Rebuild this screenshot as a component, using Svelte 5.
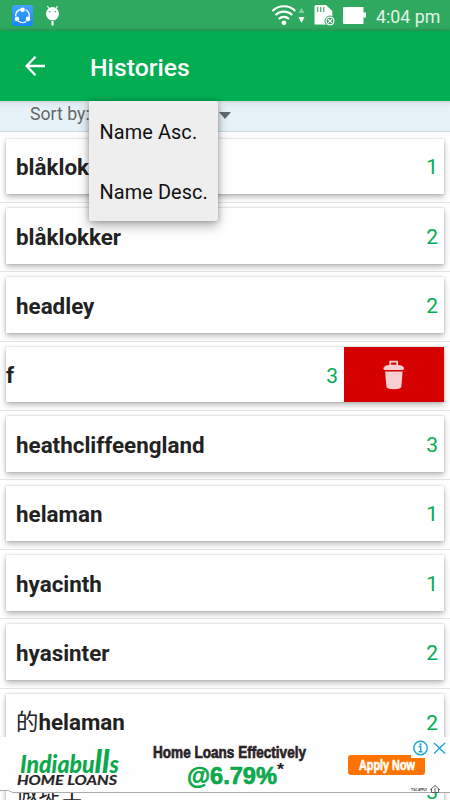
<script>
  const rows = [
    { name: 'blåklok', count: 1 },
    { name: 'blåklokker', count: 2 },
    { name: 'headley', count: 2 },
    { name: 'f', count: 3, swiped: true },
    { name: 'heathcliffeengland', count: 3 },
    { name: 'helaman', count: 1 },
    { name: 'hyacinth', count: 1 },
    { name: 'hyasinter', count: 2 },
    { name: 'helaman', han: '的', count: 2 },
    { name: '', han: '微堤士', count: 3 }
  ];
  const options = ['Name Asc.', 'Name Desc.'];
</script>

<div class="screen">
  <div class="status">
    <svg class="notif" width="50" height="22" viewBox="0 0 50 22">
      <defs>
        <linearGradient id="blue" x1="0" y1="0" x2="0" y2="1">
          <stop offset="0" stop-color="#43a3ff" /><stop offset="1" stop-color="#1688f8" />
        </linearGradient>
      </defs>
      <rect x="0" y="0" width="21" height="21" rx="2.5" fill="url(#blue)" />
      <circle cx="10.5" cy="10.800" r="6.800" fill="none" stroke="#fff" stroke-width="1.300" stroke-dasharray="8.800 5.440" stroke-dashoffset="-6.600" />
      <circle cx="10.5" cy="4.800" r="2.300" fill="#fff" />
      <circle cx="5" cy="13.900" r="2.300" fill="#fff" />
      <circle cx="16" cy="13.900" r="2.300" fill="#fff" />
      <ellipse cx="40.5" cy="8.8" rx="6.5" ry="6.7" fill="#fff" />
      <path d="M37.5 4 35.3 1M43.5 4l2.200-3" stroke="#fff" stroke-width="1.1" />
      <circle cx="37.8" cy="6.8" r=".8" fill="#2fa960" />
      <circle cx="43.2" cy="6.8" r=".8" fill="#2fa960" />
      <path d="M40.5 16v4.500" stroke="#fff" stroke-width="2" />
    </svg>
    <svg class="system" width="98" height="22" viewBox="0 0 98 22">
      <g fill="none" stroke="#fff" stroke-width="2.200">
        <path d="M1.500 6a16 16 0 0 1 22.800 0" />
        <path d="M4.600 10a11.800 11.800 0 0 1 16.600 0" />
        <path d="M7.800 14a7.300 7.300 0 0 1 10.200 0" />
      </g>
      <circle cx="12.900" cy="17.800" r="2.400" fill="#fff" />
      <path d="M27.500 8l3-5.200 3 5.200z" fill="#85cba2" />
      <path d="M27.500 12h6l-3 6z" fill="#fff" />
      <path d="M44.500 0H55l6.300 6v13.500H43.500V1z" fill="#fff" />
      <path d="M46.700 2v5M49.700 2v5M52.700 2v5" stroke="#2fa960" stroke-width="1.1" />
      <circle cx="59" cy="16" r="5" fill="#fff" stroke="#2fa960" stroke-width="1" />
      <circle cx="59" cy="16" r="3.300" fill="#2fa960" />
      <path d="M57 14l4 4M61 14l-4 4" stroke="#fff" stroke-width="1.300" />
      <path d="M73 2h19.500v5.500H95v5h-2.500V19H73q-1 0-1-1V3q0-1 1-1z" fill="#fff" />
    </svg>
    <span class="clock">4:04 pm</span>
  </div>

  <header>
    <svg width="20" height="20" viewBox="0 0 20 20" fill="none" stroke="#fff" stroke-width="2.300">
      <path d="M20 10H1.800M10.500.8 1.600 10l8.900 9.200" />
    </svg>
    <h1>Histories</h1>
  </header>

  <div class="sort">
    <span>Sort by:</span>
    <i class="caret"></i>
    <div class="menu">
      {#each options as option}
        <div class="option">{option}</div>
      {/each}
    </div>
  </div>

  <main>
    {#each rows as row}
      <div class="row">
        <div class="card" class:swiped={row.swiped}>
          <span class="name">{#if row.han}<span class="han">{row.han}</span>{/if}{row.name}</span>
          <span class="count">{row.count}</span>
          {#if row.swiped}
            <div class="delete">
              <svg width="22" height="30" viewBox="0 0 22 30" fill="#f8ced0">
                <path d="M6.3 5.2V.8h8.8v4.4h-1.8V2.6H8.1v2.6z" />
                <path d="M.4 8.7C.6 5.8 4 4.8 10.8 4.8S20.9 5.800 21.100 8.700Q21 9.900 18.500 9.900H3Q.5 9.900.4 8.700z" />
                <path d="M2.100 11.500h17.500l-1.200 15.300q-.2 2.400-7.500 2.400t-7.500-2.400z" />
              </svg>
            </div>
          {/if}
        </div>
      </div>
    {/each}
  </main>

  <aside class="ad">
    <svg width="450" height="56" viewBox="0 0 450 56">
      <path d="M0 0H450V56H13L9 54H0z" fill="#fefefe" />
      <path d="M0 53.500h8.500l4 2H450" fill="none" stroke="#aaa" stroke-width="1" />
      <text class="brand" x="20" y="35.500" textLength="99" lengthAdjust="spacingAndGlyphs">Indiabu<tspan class="tall">ll</tspan>s</text>
      <text class="loans" x="17" y="48.300" textLength="100" lengthAdjust="spacingAndGlyphs">HOME LOANS</text>
      <text class="lead" transform="translate(153 21) scale(1 1.080)" textLength="153" lengthAdjust="spacingAndGlyphs">Home Loans Effectively</text>
      <text class="rate" x="187" y="47.300" textLength="90" lengthAdjust="spacingAndGlyphs">@6.79%</text>
      <text class="star" x="277" y="38" textLength="7" lengthAdjust="spacingAndGlyphs">*</text>
      <rect x="348" y="18" width="77" height="20" rx="3" fill="#ff7400" />
      <text class="apply" x="359" y="32.500" textLength="56" lengthAdjust="spacingAndGlyphs">Apply Now</text>
      <path d="M411 0h39v21h-39z" fill="#fefefe" />
      <g fill="none" stroke="#17a8cb" stroke-width="1.400">
        <circle cx="420.500" cy="11" r="6.800" />
        <path d="M418.700 9.500h2v5.300M418.500 14.800h4M434 6l11 10.500M445 6l-11 10.500" />
      </g>
      <circle cx="420.500" cy="7.300" r="1.100" fill="#17a8cb" />
      <text class="terms" x="411" y="54" textLength="16" lengthAdjust="spacingAndGlyphs">*T&amp;C APPLY</text>
      <path d="M430 53l5-4.500 5 4.500M431.500 52v3.500h7V52M435 51v4" fill="none" stroke="#555" stroke-width=".9" />
    </svg>
  </aside>
</div>

<style>
  :global(body) { margin: 0; }
  .screen {
    position: relative;
    width: 450px;
    height: 800px;
    overflow: hidden;
    display: flex;
    flex-direction: column;
    background: #fff;
    font-family: Roboto, "Noto Sans CJK SC", sans-serif;
  }
  .status {
    height: 31px;
    flex: none;
    box-sizing: border-box;
    display: flex;
    align-items: flex-start;
    padding: 5px 10px 0 12px;
    background: #2fa960;
    color: #e2f3e8;
  }
  .system { margin-left: auto; }
  .clock { width: 64px; margin-left: 7px; font-size: 17.800px; line-height: 23px; white-space: nowrap; }
  header {
    height: 70px;
    flex: none;
    display: flex;
    align-items: center;
    padding-left: 25px;
    background: #03ad52;
    color: #fff;
    position: relative;
    z-index: 2;
    box-shadow: 0 1px 5px rgba(0, 0, 0, .45);
  }
  h1 { margin: 4px 0 0 45px; font-size: 24.800px; line-height: 32px; font-weight: 500; }
  .sort {
    position: relative;
    z-index: 3;
    height: 31px;
    flex: none;
    box-sizing: border-box;
    display: flex;
    padding-left: 30px;
    background: linear-gradient(#ccd6db 0, #dfebf0 3px, #e6f2f7 8px);
    border-bottom: 1px solid #cddbe1;
    color: #666;
    font-size: 17.700px;
    line-height: 27px;
  }
  .sort > span { width: 59px; white-space: nowrap; }
  .caret {
    width: 0;
    height: 0;
    margin: 11px 0 0 130px;
    border: 6px solid transparent;
    border-top: 7px solid #606a70;
    border-bottom: 0;
  }
  .menu {
    position: absolute;
    left: 89px;
    top: 0;
    width: 129px;
    height: 120px;
    background: #eee;
    border-radius: 2px;
    box-shadow: 0 5px 12px rgba(0, 0, 0, .3), 0 0 5px rgba(0, 0, 0, .25);
  }
  .option { height: 60px; padding-left: 10.500px; line-height: 63px; font-size: 19.900px; letter-spacing: .1px; color: #111; white-space: nowrap; }
  main { flex: none; padding-top: 1.500px; }
  .row { height: 69.400px; box-sizing: border-box; padding: 5.200px 6px 0; border-bottom: 1px solid #e4e4e4; }
  .card {
    height: 55.500px;
    display: flex;
    align-items: center;
    background: #fff;
    box-shadow: 0 3px 6px rgba(0, 0, 0, .27), 0 0 2px rgba(0, 0, 0, .2);
  }
  .name { flex: 1; padding: 1.500px 0 0 10px; font-size: 22.400px; font-weight: 700; line-height: 30px; color: #222; }
  .han { font-weight: 400; }
  .count { padding: 2px 6px 0 0; font-size: 21px; line-height: 28px; color: #03ad52; }
  .swiped .name { padding-left: 0; }
  .delete { width: 100px; height: 100%; display: flex; align-items: center; justify-content: center; background: #d50000; }
  .ad { position: absolute; z-index: 5; left: 0; top: 737px; height: 56px; }
  .ad svg { display: block; }
  .brand { font: italic 900 24px Lato, sans-serif; fill: #0ba84c; }
  .tall { font-size: 32px; }
  .loans { font: italic 700 13.800px Lato, sans-serif; fill: #292326; stroke: #292326; stroke-width: .2; }
  .lead { font: 900 14.500px "Liberation Sans", sans-serif; fill: #292326; stroke: #292326; stroke-width: .6; }
  .rate { font: 700 23.500px "Liberation Sans", sans-serif; fill: #0ba84c; stroke: #0ba84c; stroke-width: .7; }
  .star { font: 700 17px "Liberation Sans", sans-serif; fill: #222; }
  .apply { font: 700 14px "Liberation Sans", sans-serif; fill: #fff; stroke: #fff; stroke-width: .6; }
  .terms { font: 700 4px "Liberation Sans", sans-serif; fill: #222; }
</style>
